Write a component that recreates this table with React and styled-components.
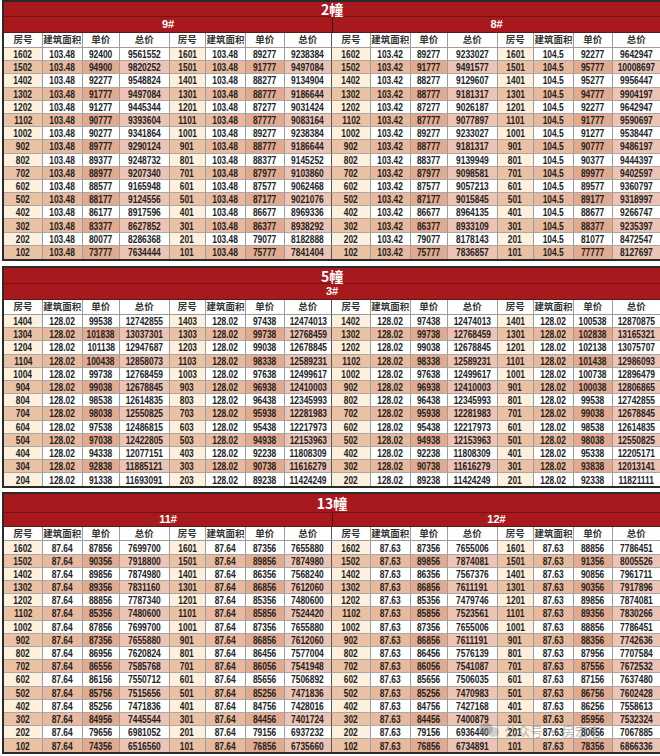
import React from "react";
import styled, { createGlobalStyle } from "styled-components";

const GlobalStyle = createGlobalStyle`
  html, body { margin: 0; padding: 0; background: #fff; }
  body { font-family: "Liberation Sans", "Noto Sans CJK SC", sans-serif; }
`;

// column widths for one building half (4 cols x 2 groups)
const COLS = [39, 39.5, 37.5, 49.5, 36.5, 40, 38.5, 47.5];
const HEADS = ["房号", "建筑面积", "单价", "总价"];

const buildings = [
  {
    name: "2幢",
    titleH: 15,
    subH: 16,
    headH: 15,
    gap: 5,
    subs: ["9#", "8#"],
    areas: ["103.48", "103.48", "103.42", "104.5"],
    rows: `1602 92400 9561552 1601 89277 9238384 1602 89277 9233027 1601 92277 9642947
1502 94900 9820252 1501 91777 9497084 1502 91777 9491577 1501 95777 10008697
1402 92277 9548824 1401 88277 9134904 1402 88277 9129607 1401 95277 9956447
1302 91777 9497084 1301 88777 9186644 1302 88777 9181317 1301 94777 9904197
1202 91277 9445344 1201 87277 9031424 1202 87277 9026187 1201 92277 9642947
1102 90777 9393604 1101 87777 9083164 1102 87777 9077897 1101 91777 9590697
1002 90277 9341864 1001 89277 9238384 1002 89277 9233027 1001 91277 9538447
902 89777 9290124 901 88777 9186644 902 88777 9181317 901 90777 9486197
802 89377 9248732 801 88377 9145252 802 88377 9139949 801 90377 9444397
702 88977 9207340 701 87977 9103860 702 87977 9098581 701 89977 9402597
602 88577 9165948 601 87577 9062468 602 87577 9057213 601 89577 9360797
502 88177 9124556 501 87177 9021076 502 87177 9015845 501 89177 9318997
402 86177 8917596 401 86677 8969336 402 86677 8964135 401 88677 9266747
302 83377 8627852 301 86377 8938292 302 86377 8933109 301 88377 9235397
202 80077 8286368 201 79077 8182888 202 79077 8178143 201 81077 8472547
102 73777 7634444 101 75777 7841404 102 75777 7836857 101 77777 8127697`,
  },
  {
    name: "5幢",
    titleH: 16,
    subH: 16,
    headH: 15,
    gap: 4,
    subs: ["3#"],
    areas: ["128.02", "128.02", "128.02", "128.02"],
    rows: `1404 99538 12742855 1403 97438 12474013 1402 97438 12474013 1401 100538 12870875
1304 101838 13037301 1303 99738 12768459 1302 99738 12768459 1301 102838 13165321
1204 101138 12947687 1203 99038 12678845 1202 99038 12678845 1201 102138 13075707
1104 100438 12858073 1103 98338 12589231 1102 98338 12589231 1101 101438 12986093
1004 99738 12768459 1003 97638 12499617 1002 97638 12499617 1001 100738 12896479
904 99038 12678845 903 96938 12410003 902 96938 12410003 901 100038 12806865
804 98538 12614835 803 96438 12345993 802 96438 12345993 801 99538 12742855
704 98038 12550825 703 95938 12281983 702 95938 12281983 701 99038 12678845
604 97538 12486815 603 95438 12217973 602 95438 12217973 601 98538 12614835
504 97038 12422805 503 94938 12153963 502 94938 12153963 501 98038 12550825
404 94338 12077151 403 92238 11808309 402 92238 11808309 401 95338 12205171
304 92838 11885121 303 90738 11616279 302 90738 11616279 301 93838 12013141
204 91338 11693091 203 89238 11424249 202 89238 11424249 201 92338 11821111`,
  },
  {
    name: "13幢",
    titleH: 19,
    subH: 14,
    headH: 14,
    gap: 0,
    subs: ["11#", "12#"],
    areas: ["87.64", "87.64", "87.63", "87.63"],
    rows: `1602 87856 7699700 1601 87356 7655880 1602 87356 7655006 1601 88856 7786451
1502 90356 7918800 1501 89856 7874980 1502 89856 7874081 1501 91356 8005526
1402 89856 7874980 1401 86356 7568240 1402 86356 7567376 1401 90856 7961711
1302 89356 7831160 1301 86856 7612060 1302 86856 7611191 1301 90356 7917896
1202 88856 7787340 1201 85356 7480600 1202 85356 7479746 1201 89856 7874081
1102 85356 7480600 1101 85856 7524420 1102 85856 7523561 1101 89356 7830266
1002 87856 7699700 1001 87356 7655880 1002 87356 7655006 1001 88856 7786451
902 87356 7655880 901 86856 7612060 902 86856 7611191 901 88356 7742636
802 86956 7620824 801 86456 7577004 802 86456 7576139 801 87956 7707584
702 86556 7585768 701 86056 7541948 702 86056 7541087 701 87556 7672532
602 86156 7550712 601 85656 7506892 602 85656 7506035 601 87156 7637480
502 85756 7515656 501 85256 7471836 502 85256 7470983 501 86756 7602428
402 85256 7471836 401 84756 7428016 402 84756 7427168 401 86256 7558613
302 84956 7445544 301 84456 7401724 302 84456 7400879 301 85956 7532324
202 79656 6981052 201 79156 6937232 202 79156 6936440 201 80656 7067885
102 74356 6516560 101 76856 6735660 102 76856 6734891 101 78356 6866336`,
  },
];

const RED = "#a8191e";

const Page = styled.div`
  position: relative;
  width: 656px;
  padding: 0 2px;
  display: flex;
  flex-direction: column;
`;

const Sheet = styled.table`
  width: 656px;
  table-layout: fixed;
  border-collapse: separate;
  border-spacing: 0;
  border: 2px solid #2a2a2a;
  margin-bottom: ${(p) => p.$gap}px;
  box-sizing: border-box;
`;

const TitleCell = styled.th`
  height: ${(p) => p.$h}px;
  padding: 0;
  background: ${RED};
  color: #fff;
  font: 700 14px/1 "Noto Sans CJK SC", "Liberation Sans", sans-serif;
  text-align: center;
  border-bottom: 1px solid #7a1014;
  box-sizing: border-box;
`;

const SubCell = styled.th`
  height: ${(p) => p.$h}px;
  padding: 0;
  background: ${RED};
  color: #fff;
  font: 700 11px/1 "Liberation Sans", "Noto Sans CJK SC", sans-serif;
  text-align: center;
  border-left: ${(p) => (p.$split ? "1px solid #4a1010" : "none")};
  border-bottom: 1px solid #5a1a1a;
  box-sizing: border-box;
`;

const HeadCell = styled.th`
  height: ${(p) => p.$h}px;
  padding: 0;
  background: #fff;
  color: #333;
  font: 700 9.5px/1 "Noto Sans CJK SC", sans-serif;
  text-align: center;
  white-space: nowrap;
  overflow: hidden;
  border-right: 1px solid ${(p) => (p.$edge ? "#555" : "#9c9c9c")};
  border-bottom: 1px solid #9c9c9c;
  box-sizing: border-box;
  &:last-child { border-right: none; }
`;

const tint = (alt, kind) => {
  if (!alt) return kind === 0 ? "#fdf0dc" : "#ffffff";
  return ["#ebc1a4", "#e8b99d", "#e2ab8f", "#edc3b4"][kind];
};

const Cell = styled.td`
  height: 13.2px;
  padding: 0;
  background: ${(p) => tint(p.$alt, p.$kind)};
  color: #222;
  font: 700 10.5px/12px "Liberation Sans", sans-serif;
  text-align: center;
  white-space: nowrap;
  overflow: hidden;
  border-right: 1px solid ${(p) => (p.$edge ? "#555" : "#9c9c9c")};
  border-bottom: 1px solid #a8a8a8;
  box-sizing: border-box;
  &:last-child { border-right: none; }
  tr:last-child > & { border-bottom: none; }
`;

// the sheet font is a narrow one, so squeeze the figures a bit
const Num = styled.span`
  display: inline-block;
  transform: scaleX(0.8);
  transform-origin: center;
`;

const Watermark = styled.div`
  position: absolute;
  left: 478px;
  top: 722px;
  display: flex;
  align-items: center;
  gap: 4px;
  color: rgba(120, 120, 120, 0.55);
  font: 400 13px/1 "Noto Sans CJK SC", sans-serif;
  pointer-events: none;
`;

function parseRows(text, areas) {
  return text.split("\n").map((line) => {
    const v = line.trim().split(/\s+/);
    const cells = [];
    for (let g = 0; g < 4; g++) {
      cells.push(v[g * 3], areas[g], v[g * 3 + 1], v[g * 3 + 2]);
    }
    return cells;
  });
}

function BuildingTable({ b }) {
  const rows = parseRows(b.rows, b.areas);
  const widths = [...COLS, ...COLS];
  return (
    <Sheet $gap={b.gap}>
      <colgroup>
        {widths.map((w, i) => (
          <col key={i} style={{ width: w }} />
        ))}
      </colgroup>
      <thead>
        <tr>
          <TitleCell colSpan={16} $h={b.titleH}>{b.name}</TitleCell>
        </tr>
        <tr>
          {b.subs.map((s, i) => (
            <SubCell key={s} colSpan={16 / b.subs.length} $h={b.subH} $split={i > 0}>
              {s}
            </SubCell>
          ))}
        </tr>
        <tr>
          {widths.map((_, i) => (
            <HeadCell key={i} $h={b.headH} $edge={i === 7}>
              {HEADS[i % 4]}
            </HeadCell>
          ))}
        </tr>
      </thead>
      <tbody>
        {rows.map((r, ri) => (
          <tr key={ri}>
            {r.map((c, ci) => (
              <Cell key={ci} $alt={ri % 2 === 1} $kind={ci % 4} $edge={ci === 7}>
                <Num>{c}</Num>
              </Cell>
            ))}
          </tr>
        ))}
      </tbody>
    </Sheet>
  );
}

export default function App() {
  return (
    <>
      <GlobalStyle />
      <Page>
        {buildings.map((b) => (
          <BuildingTable key={b.name} b={b} />
        ))}
        <Watermark>
          <svg width="22" height="16" viewBox="0 0 22 16">
            <ellipse cx="8" cy="7" rx="7" ry="6" fill="rgba(120,120,120,0.45)" />
            <ellipse cx="15" cy="10" rx="6" ry="5" fill="rgba(150,150,150,0.45)" />
          </svg>
          <span>公众号 · 房宏宅</span>
        </Watermark>
      </Page>
    </>
  );
}
